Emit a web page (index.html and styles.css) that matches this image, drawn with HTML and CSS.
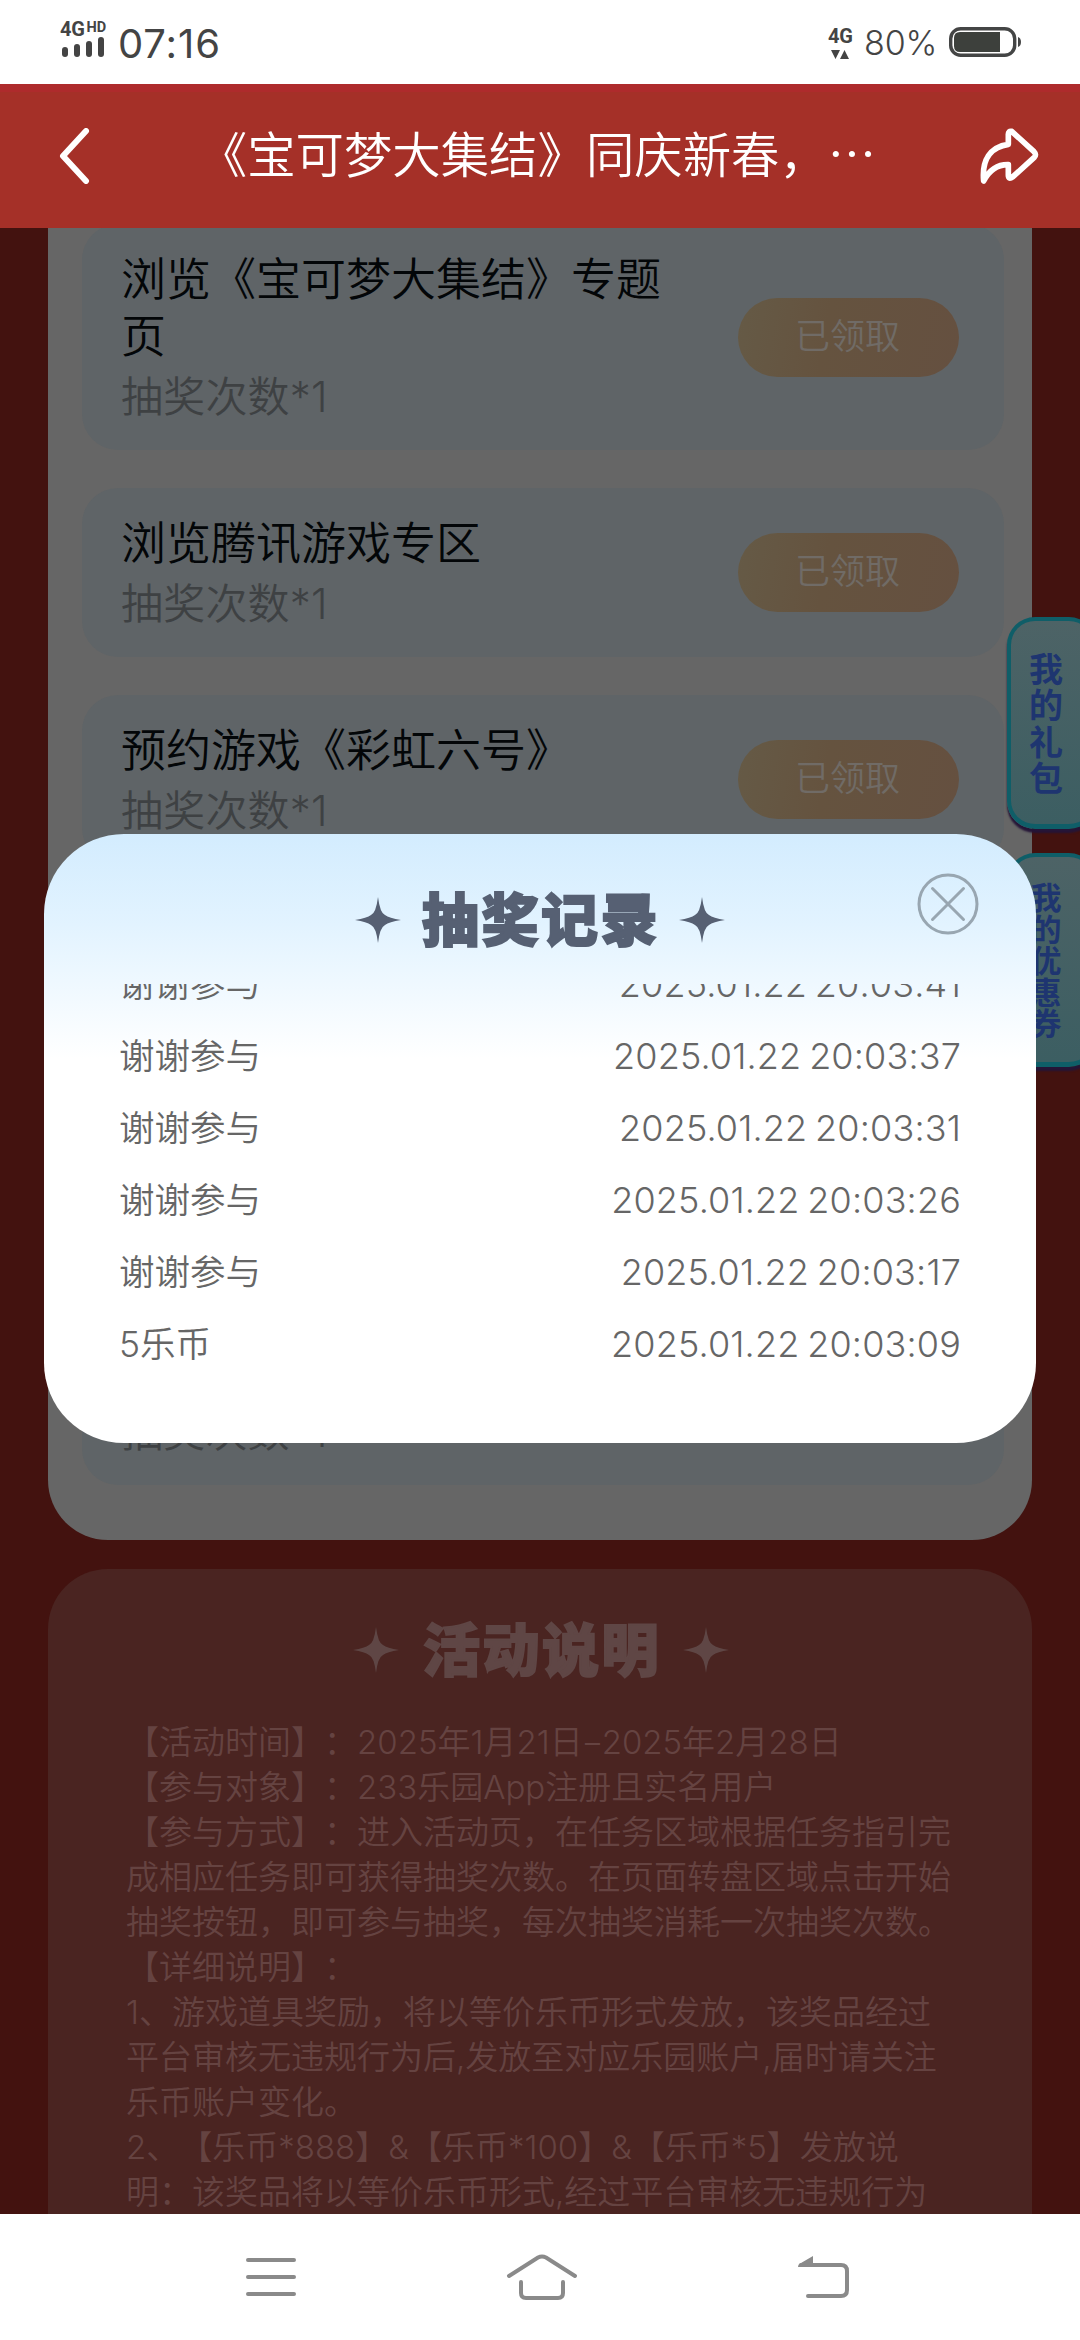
FILE: index.html
```html
<!DOCTYPE html>
<html lang="zh-CN">
<head>
<meta charset="utf-8">
<title>活动</title>
<link rel="stylesheet" href="styles.css">
</head>
<body>
<div class="phone">
  <div class="status">
    <div class="signal">
      <div class="net"><b>4G</b><i>HD</i></div>
      <div class="bars"><span class="bar b1"></span><span class="bar b2"></span><span class="bar b3"></span><span class="bar b4"></span></div>
    </div>
    <div class="clock">07:16</div>
    <div class="data">
      <b>4G</b>
      <svg width="18" height="9" viewBox="0 0 18 9"><path d="M0 0h9L4.500 9zM9 9h9L13.500 0z" fill="#444"/></svg>
    </div>
    <div class="percent">80%</div>
    <svg class="battery" width="72" height="30" viewBox="0 0 72 30"><rect x="1.700" y="1.700" width="64" height="26.600" rx="10" fill="none" stroke="#444545" stroke-width="3.400"/><path d="M11 5H51V25H11Q5 25 5 19V11Q5 5 11 5z" fill="#3d403c"/><path d="M69 10q3 1 3 5t-3 5z" fill="#444545"/></svg>
  </div>

  <div class="header">
    <svg class="back" width="34" height="56" viewBox="0 0 34 56"><path d="M28 3L5 28L28 53" fill="none" stroke="#fff" stroke-width="6" stroke-linecap="round" stroke-linejoin="round"/></svg>
    <div class="header-title">《宝可梦大集结》同庆新春，…</div>
    <svg class="share" width="62" height="60" viewBox="532 347 186 180"><path d="M620 372Q620 361 630 363L697 424Q706 433 697 442L634 499Q620 509 620 495V463Q572 462 546 512C540 450 565 410 620 402Z" fill="none" stroke="#fff" stroke-width="17" stroke-linecap="round" stroke-linejoin="round"/></svg>
  </div>

  <div class="content">
    <div class="tasks">
      <div class="card">
        <div class="card-text"><div class="card-title">浏览《宝可梦大集结》专题<br>页</div><div class="card-sub">抽奖次数*1</div></div>
        <div class="btn">已领取</div>
      </div>
      <div class="card">
        <div class="card-text"><div class="card-title">浏览腾讯游戏专区</div><div class="card-sub">抽奖次数*1</div></div>
        <div class="btn">已领取</div>
      </div>
      <div class="card">
        <div class="card-text"><div class="card-title">预约游戏《彩虹六号》</div><div class="card-sub">抽奖次数*1</div></div>
        <div class="btn">已领取</div>
      </div>
      <div class="card card-last">
        <div class="card-text"><div class="card-sub">抽奖次数*1</div></div>
      </div>
    </div>

    <div class="info">
      <div class="heading heading-dim">
        <svg width="48" height="48" viewBox="-24 -24 48 48"><path d="M0 -23Q2 -7 7 -5Q11 -2 23 0Q11 2 7 5Q2 7 0 23Q-2 7 -7 5Q-11 2 -23 0Q-11 -2 -7 -5Q-2 -7 0 -23z"/></svg>
        <span>活动说明</span>
        <svg width="48" height="48" viewBox="-24 -24 48 48"><path d="M0 -23Q2 -7 7 -5Q11 -2 23 0Q11 2 7 5Q2 7 0 23Q-2 7 -7 5Q-11 2 -23 0Q-11 -2 -7 -5Q-2 -7 0 -23z"/></svg>
      </div>
      <div class="rules">【活动时间】：2025年1月21日<span class="dash">-</span>2025年2月28日<br>【参与对象】：233乐园App注册且实名用户<br>【参与方式】：进入活动页，在任务区域根据任务指引完<br>成相应任务即可获得抽奖次数。在页面转盘区域点击开始<br>抽奖按钮，即可参与抽奖，每次抽奖消耗一次抽奖次数。<br>【详细说明】：<br>1、游戏道具奖励，将以等价乐币形式发放，该奖品经过<br>平台审核无违规行为后,发放至对应乐园账户,届时请关注<br>乐币账户变化。<br>2、【乐币*888】&amp;【乐币*100】&amp;【乐币*5】发放说<br>明：该奖品将以等价乐币形式,经过平台审核无违规行为</div>
    </div>

    <div class="tab tab-gift"><span>我</span><span>的</span><span>礼</span><span>包</span></div>
    <div class="tab tab-coupon"><span>我</span><span>的</span><span>优</span><span>惠</span><span>券</span></div>

    <div class="modal">
      <div class="heading">
        <svg width="48" height="48" viewBox="-24 -24 48 48"><path d="M0 -23Q2 -7 7 -5Q11 -2 23 0Q11 2 7 5Q2 7 0 23Q-2 7 -7 5Q-11 2 -23 0Q-11 -2 -7 -5Q-2 -7 0 -23z"/></svg>
        <span>抽奖记录</span>
        <svg width="48" height="48" viewBox="-24 -24 48 48"><path d="M0 -23Q2 -7 7 -5Q11 -2 23 0Q11 2 7 5Q2 7 0 23Q-2 7 -7 5Q-11 2 -23 0Q-11 -2 -7 -5Q-2 -7 0 -23z"/></svg>
      </div>
      <svg class="close" width="62" height="62" viewBox="-31 -31 62 62"><g fill="none" stroke="#98a6b1" stroke-width="3" stroke-linecap="round"><circle r="29"/><path d="M-15.500 -15.500L15.500 15.500M15.500 -15.500L-15.500 15.500"/></g></svg>
      <div class="records">
        <div class="row row-cut"><span>谢谢参与</span><span class="date">2025.01.22 20:03:41</span></div>
        <div class="row"><span>谢谢参与</span><span class="date">2025.01.22 20:03:37</span></div>
        <div class="row"><span>谢谢参与</span><span class="date">2025.01.22 20:03:31</span></div>
        <div class="row"><span>谢谢参与</span><span class="date">2025.01.22 20:03:26</span></div>
        <div class="row"><span>谢谢参与</span><span class="date">2025.01.22 20:03:17</span></div>
        <div class="row"><span>5乐币</span><span class="date">2025.01.22 20:03:09</span></div>
      </div>
    </div>
  </div>

  <div class="nav">
    <svg width="50" height="40" viewBox="0 0 50 40"><path d="M2 3H48M2 20H48M2 37H48" stroke="#8a8a8a" stroke-width="4" stroke-linecap="round"/></svg>
    <svg class="home" width="72" height="48" viewBox="0 0 72 48"><g fill="none" stroke="#8a8a8a" stroke-width="4" stroke-linecap="round"><path d="M3 23L32 4.500Q36 2.500 40 4.500L69 23"/><path d="M15 29V40Q15 45 20 45H52Q57 45 57 40V29"/></g></svg>
    <svg width="52" height="44" viewBox="0 0 52 44"><path d="M10 41H43Q49 41 49 35V16Q49 10 43 10H3" fill="none" stroke="#8a8a8a" stroke-width="4" stroke-linecap="round"/><path d="M0 12Q0 9 3 8L15 1V12z" fill="#8a8a8a"/></svg>
  </div>
</div>
</body>
</html>
```
FILE: styles.css
```css
* { box-sizing: border-box; }
body { margin: 0; }
svg { display: block; flex: none; }

.phone {
  width: 1080px;
  height: 2340px;
  display: flex;
  flex-direction: column;
  overflow: hidden;
  background: #fff;
  font-family: Inter, "Noto Sans CJK SC", sans-serif;
  font-weight: 350;
  text-spacing-trim: space-all;
}

/* status bar */
.status {
  height: 84px;
  flex: none;
  display: flex;
  align-items: flex-start;
  padding: 0 59px 0 60px;
  color: #444;
}
.signal { width: 48px; padding-top: 22px; }
.net { display: flex; height: 15px; align-items: flex-start; gap: 2px; }
.net b, .data b { font: 700 20px/15px Roboto, sans-serif; letter-spacing: -0.3px; }
.net i { font: 700 14.500px/11px Roboto, sans-serif; }
.bars { display: flex; align-items: flex-end; gap: 6px; height: 20px; padding-left: 2px; }
.bar { width: 6px; border-radius: 3px; background: #444; }
.b1 { height: 10px; }
.b2 { height: 13px; }
.b3 { height: 16px; }
.b4 { height: 20px; }
.clock { margin-left: 10px; font-size: 40px; line-height: 88px; font-weight: 400; letter-spacing: 0.9px; }
.data { margin-left: auto; padding-top: 27px; width: 24px; }
.data svg { margin: 3px 0 0 3px; }
.percent { width: 72px; margin-left: 12px; font-size: 34px; line-height: 86px; white-space: nowrap; letter-spacing: -0.1px; }
.battery { margin: 27px 0 0 13px; }

/* title bar */
.header {
  height: 144px;
  flex: none;
  display: flex;
  align-items: center;
  justify-content: space-between;
  padding: 0 39px 0 58px;
  background: #a53028;
  border-top: 8px solid #ae2b2c;
  color: #fff;
}
.header-title {
  font-family: "Noto Sans CJK SC", sans-serif;
  font-size: 48.400px;
  line-height: 60px;
  white-space: nowrap;
  margin: -17px 0 0 4px;
}
.back, .share { margin-top: -8px; }

/* dimmed page */
.content {
  position: relative;
  height: 1986px;
  flex: none;
  overflow: hidden;
  background: #43120f;
  padding: 0 48px;
}
.tasks {
  display: flex;
  flex-direction: column;
  gap: 38px;
  height: 1312px;
  padding: 0 28px 0 34px;
  background: #666;
  border-radius: 0 0 60px 60px;
}
.card {
  flex: none;
  display: flex;
  align-items: center;
  justify-content: space-between;
  height: 169px;
  padding: 0 45px 0 39px;
  border-radius: 36px;
  background: #5f6467;
}
.card:first-child { margin-top: -4px; height: 226px; }
.card-last { margin-top: 414px; align-items: flex-end; padding-bottom: 22px; }
.card-text { padding-top: 5px; }
.card-title { font-size: 45px; line-height: 57px; color: #030608; white-space: nowrap; }
.card-sub { font-size: 42px; line-height: 63px; color: #3e4143; letter-spacing: 0.2px; }
.btn {
  width: 221px;
  height: 79px;
  border-radius: 40px;
  background: linear-gradient(100deg, #655a46, #65533f 40%, #655040);
  color: #706b66;
  font-size: 35px;
  line-height: 76px;
  text-align: center;
  padding-right: 2px;
}

.info {
  margin-top: 29px;
  height: 760px;
  padding: 46px 79px 0 78px;
  border-radius: 60px 60px 0 0;
  background: #4a2421;
}
.heading {
  display: flex;
  align-items: center;
  justify-content: center;
  gap: 18px;
  height: 70px;
  color: #566073;
  fill: #566073;
  font-family: "Noto Sans CJK SC", sans-serif;
  font-size: 57px;
  font-weight: 900;
  line-height: 70px;
}
.heading span {
  -webkit-text-stroke: 2px currentColor;
  letter-spacing: 2.500px;
  width: 240px;
  margin-top: -9px;
  padding-left: 2px;
  white-space: nowrap;
}
.heading-dim { color: #5f4645; fill: #5f4645; gap: 21px; padding-left: 3px; }
.rules {
  margin-top: 35px;
  font-size: 33px;
  line-height: 45px;
  white-space: nowrap;
  color: #654341;
}
.dash { display: inline-block; transform: scaleX(1.500); margin: 0 2px; }

/* side tabs */
.tab {
  position: absolute;
  left: 1007px;
  width: 90px;
  border: 4px solid #0f5e68;
  border-bottom-width: 5px;
  border-radius: 28px;
  background: linear-gradient(#4d6366, #3c5e62);
  box-shadow: 0 4px 2px #251537;
  display: flex;
  flex-direction: column;
  align-items: center;
  padding-right: 12px;
  color: #1e3570;
  font-size: 34px;
  font-weight: 700;
}
.tab-gift { top: 389px; height: 212px; padding-top: 31px; line-height: 36.300px; }
.tab-coupon { top: 625px; height: 214px; padding-top: 25px; font-size: 31px; line-height: 31.600px; }

/* record dialog */
.modal {
  position: absolute;
  left: 44px;
  top: 606px;
  width: 992px;
  height: 609px;
  border-radius: 80px;
  padding: 51px 75px 0;
  background: linear-gradient(#d3ecfe, #e2f3ff 90px, #fff 225px);
}
.close { position: absolute; right: 57px; top: 39px; }
.records {
  margin-top: 29px;
  height: 396px;
  overflow: hidden;
  color: #666;
}
.row {
  display: flex;
  justify-content: space-between;
  height: 72px;
  line-height: 73px;
  font-size: 35.500px;
}
.row-cut { margin-top: -36px; }
.date { font-size: 36px; font-weight: 300; word-spacing: -2.500px; letter-spacing: 0.150px; line-height: 72px; }

/* system navigation */
.nav {
  height: 126px;
  flex: none;
  display: flex;
  align-items: center;
  justify-content: space-between;
  padding: 0 230px 0 246px;
}
.home { margin-right: 11px; }
```
